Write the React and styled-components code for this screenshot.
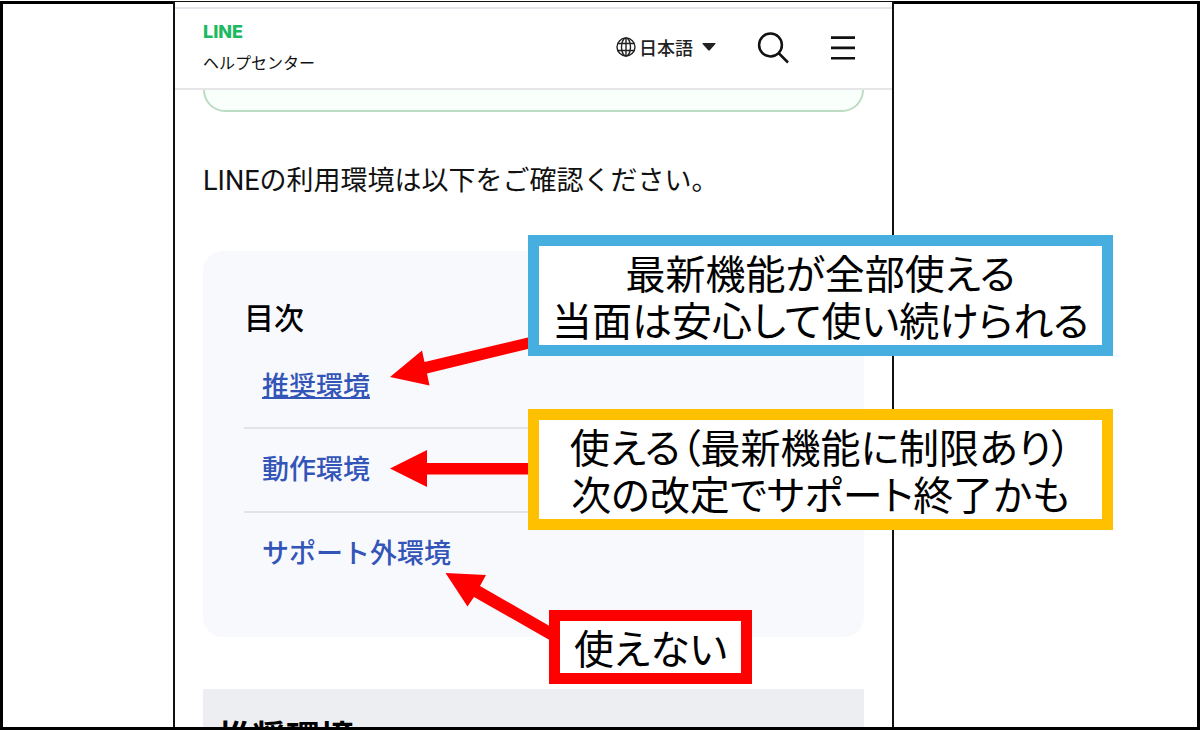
import React from 'react';
import styled, { createGlobalStyle } from 'styled-components';

const GlobalStyle = createGlobalStyle`
  * {
    box-sizing: border-box;
  }

  body {
    margin: 0;
    background: #fff;
    color: #111;
    font-family: "Noto Sans CJK JP", sans-serif;
  }
`;

const Page = styled.div`
  position: relative;
  display: flex;
  height: 100vh;
  padding-top: 1px;
  overflow: hidden;
`;

const Frame = styled.main`
  flex: 1;
  display: flex;
  min-width: 0;
  border: 3px solid #000;
`;

const Phone = styled.div`
  flex: 1;
  display: flex;
  flex-direction: column;
  min-width: 0;
  margin: -3px 303px 0 170px;
  border: solid #111;
  border-width: 1px 2px 0;
  background: #fff;
  overflow: hidden;
`;

const Header = styled.header`
  flex: none;
  display: flex;
  align-items: center;
  justify-content: space-between;
  height: 83px;
  margin-top: 5px;
  padding: 0 36px 1px 28px;
  border-top: 2px solid #e4e4ea;
  border-bottom: 2px solid #e6e6e8;
`;

const Brand = styled.a`
  margin-bottom: 2px;
  color: #111;
  font-size: 16px;
  line-height: 30px;
  text-decoration: none;
`;

const BrandName = styled.strong`
  display: block;
  color: #1db960;
  font-family: Inter, sans-serif;
  font-size: 18px;
  font-weight: 800;
`;

const Tools = styled.div`
  display: flex;
  align-items: center;
`;

const LanguageButton = styled.button`
  display: flex;
  align-items: center;
  margin-bottom: 2px;
  padding: 0;
  border: 0;
  background: none;
  color: #222;
  font-family: inherit;
  font-size: 18px;
  font-weight: 500;
  line-height: 24px;
  cursor: pointer;

  svg:first-child {
    margin-right: 3px;
  }

  svg:last-child {
    margin-left: 9px;
  }
`;

const IconButton = styled.button`
  display: flex;
  margin-left: 41px;
  padding: 0;
  border: 0;
  background: none;
  color: #111;
  cursor: pointer;
`;

const Content = styled.div`
  flex: 1;
  min-height: 0;
  padding: 0 28px;
  overflow: hidden;
`;

const NoticeEnd = styled.div`
  height: 22px;
  border: 2px solid #bcdcc3;
  border-top: 0;
  border-radius: 0 0 22px 22px;
  background: #f9fffb;
`;

const Lead = styled.p`
  margin: 49px 0 50px;
  font-family: Roboto, "Noto Sans CJK JP", sans-serif;
  font-size: 27px;
  line-height: 40px;
`;

const Toc = styled.nav`
  height: 386px;
  padding: 43px 41px 0;
  border-radius: 20px;
  background: #f8f9fd;
`;

const TocTitle = styled.h2`
  margin: 0 0 5px;
  color: #000;
  font-size: 30px;
  font-weight: 500;
  line-height: 44px;
`;

const TocList = styled.ul`
  margin: 0;
  padding: 0;
  list-style: none;
`;

const TocItem = styled.li`
  display: flex;
  align-items: center;
  height: 84px;
  padding-left: 18px;

  & + & {
    padding-bottom: 4px;
    border-top: 2px solid #e3e4e8;
  }
`;

const TocLink = styled.a`
  color: #3455b8;
  font-size: 27px;
  font-weight: 500;
  line-height: 40px;
  text-decoration: ${(props) => (props.$active ? 'underline' : 'none')};
  text-decoration-thickness: 2px;
  text-underline-offset: 1px;
`;

const SectionTitle = styled.h2`
  margin: 52px 0 0;
  padding: 22px 15px;
  background: #edeef2;
  color: #000;
  font-size: 34px;
  font-weight: 700;
  line-height: 50px;
`;

const Arrows = styled.svg`
  position: absolute;
  top: 0;
  left: 0;
  width: 100%;
  height: 100%;
  fill: #f00;
  pointer-events: none;
`;

const Callout = styled.p`
  position: absolute;
  top: ${(props) => props.$top}px;
  left: ${(props) => props.$left}px;
  width: ${(props) => props.$width}px;
  margin: 0;
  padding: 3px 0 2px;
  border: 11px solid ${(props) => props.$color};
  background: #fff;
  color: #000;
  font-size: 40px;
  font-feature-settings: "palt";
  line-height: 47px;
  text-align: center;
  white-space: nowrap;
`;

const links = [
  { id: 'recommended', label: '推奨環境', active: true },
  { id: 'supported', label: '動作環境' },
  { id: 'unsupported', label: 'サポート外環境' },
];

const callouts = [
  { top: 235, left: 528, width: 585, color: '#46afe0', lines: ['最新機能が全部使える', '当面は安心して使い続けられる'] },
  { top: 409, left: 528, width: 585, color: '#ffc000', lines: ['使える（最新機能に制限あり）', '次の改定でサポート終了かも'] },
  { top: 610, left: 549, width: 203, color: '#f00', lines: ['使えない'] },
];

const GlobeIcon = () => (
  <svg width="20" height="20" viewBox="0 0 20 20" fill="none" stroke="currentColor" strokeWidth="1.4">
    <circle cx="10" cy="10" r="9" />
    <ellipse cx="10" cy="10" rx="4.5" ry="9" />
    <path d="M10 1v18M1.8 6.5h16.4M1.8 13.5h16.4" />
  </svg>
);

const CaretIcon = () => (
  <svg width="14" height="8" viewBox="0 0 14 8" fill="currentColor">
    <path d="M1 0h12q1 0 .4 .9L7.8 7.3q-.8.7-1.6 0L.6.9Q0 0 1 0z" />
  </svg>
);

const SearchIcon = () => (
  <svg width="32" height="32" viewBox="0 0 32 32" fill="none" stroke="currentColor" strokeWidth="2.5">
    <circle cx="13.5" cy="13" r="11.4" />
    <path d="M21.5 21l9.5 9.5" />
  </svg>
);

const MenuIcon = () => (
  <svg width="26" height="26" viewBox="0 0 26 26" stroke="currentColor" strokeWidth="2.6">
    <path d="M1 2.6h24M1 12.9h24M1 23.2h24" />
  </svg>
);

const App = () => {
  return (
    <Page>
      <GlobalStyle />
      <Frame>
        <Phone>
          <Header>
            <Brand href="#top">
              <BrandName>LINE</BrandName>
              ヘルプセンター
            </Brand>
            <Tools>
              <LanguageButton type="button">
                <GlobeIcon />
                日本語
                <CaretIcon />
              </LanguageButton>
              <IconButton type="button" aria-label="検索">
                <SearchIcon />
              </IconButton>
              <IconButton type="button" aria-label="メニュー">
                <MenuIcon />
              </IconButton>
            </Tools>
          </Header>
          <Content>
            <NoticeEnd />
            <Lead>LINEの利用環境は以下をご確認ください。</Lead>
            <Toc>
              <TocTitle>目次</TocTitle>
              <TocList>
                {links.map((link) => (
                  <TocItem key={link.id}>
                    <TocLink href={`#${link.id}`} $active={link.active}>
                      {link.label}
                    </TocLink>
                  </TocItem>
                ))}
              </TocList>
            </Toc>
            <SectionTitle id="recommended">推奨環境</SectionTitle>
          </Content>
        </Phone>
      </Frame>

      {/* Arrows go under the callouts, so their tails can run below the borders */}
      <Arrows aria-hidden="true">
        <path d="M390 377L422 350.5L424.5 362L532 336.5V348L427 373.5L429.5 385.5Z" />
        <path d="M390 468.5L427 450V463H532V474.5H427V487Z" />
        <path d="M445.5 573L486 575L480 586L553 628V642L474 597L467.5 606.5Z" />
      </Arrows>
      {callouts.map((item) => (
        <Callout key={item.color} $top={item.top} $left={item.left} $width={item.width} $color={item.color}>
          {item.lines.map((line, index) => (
            <React.Fragment key={line}>
              {index > 0 && <br />}
              {line}
            </React.Fragment>
          ))}
        </Callout>
      ))}
    </Page>
  );
};

export default App;
